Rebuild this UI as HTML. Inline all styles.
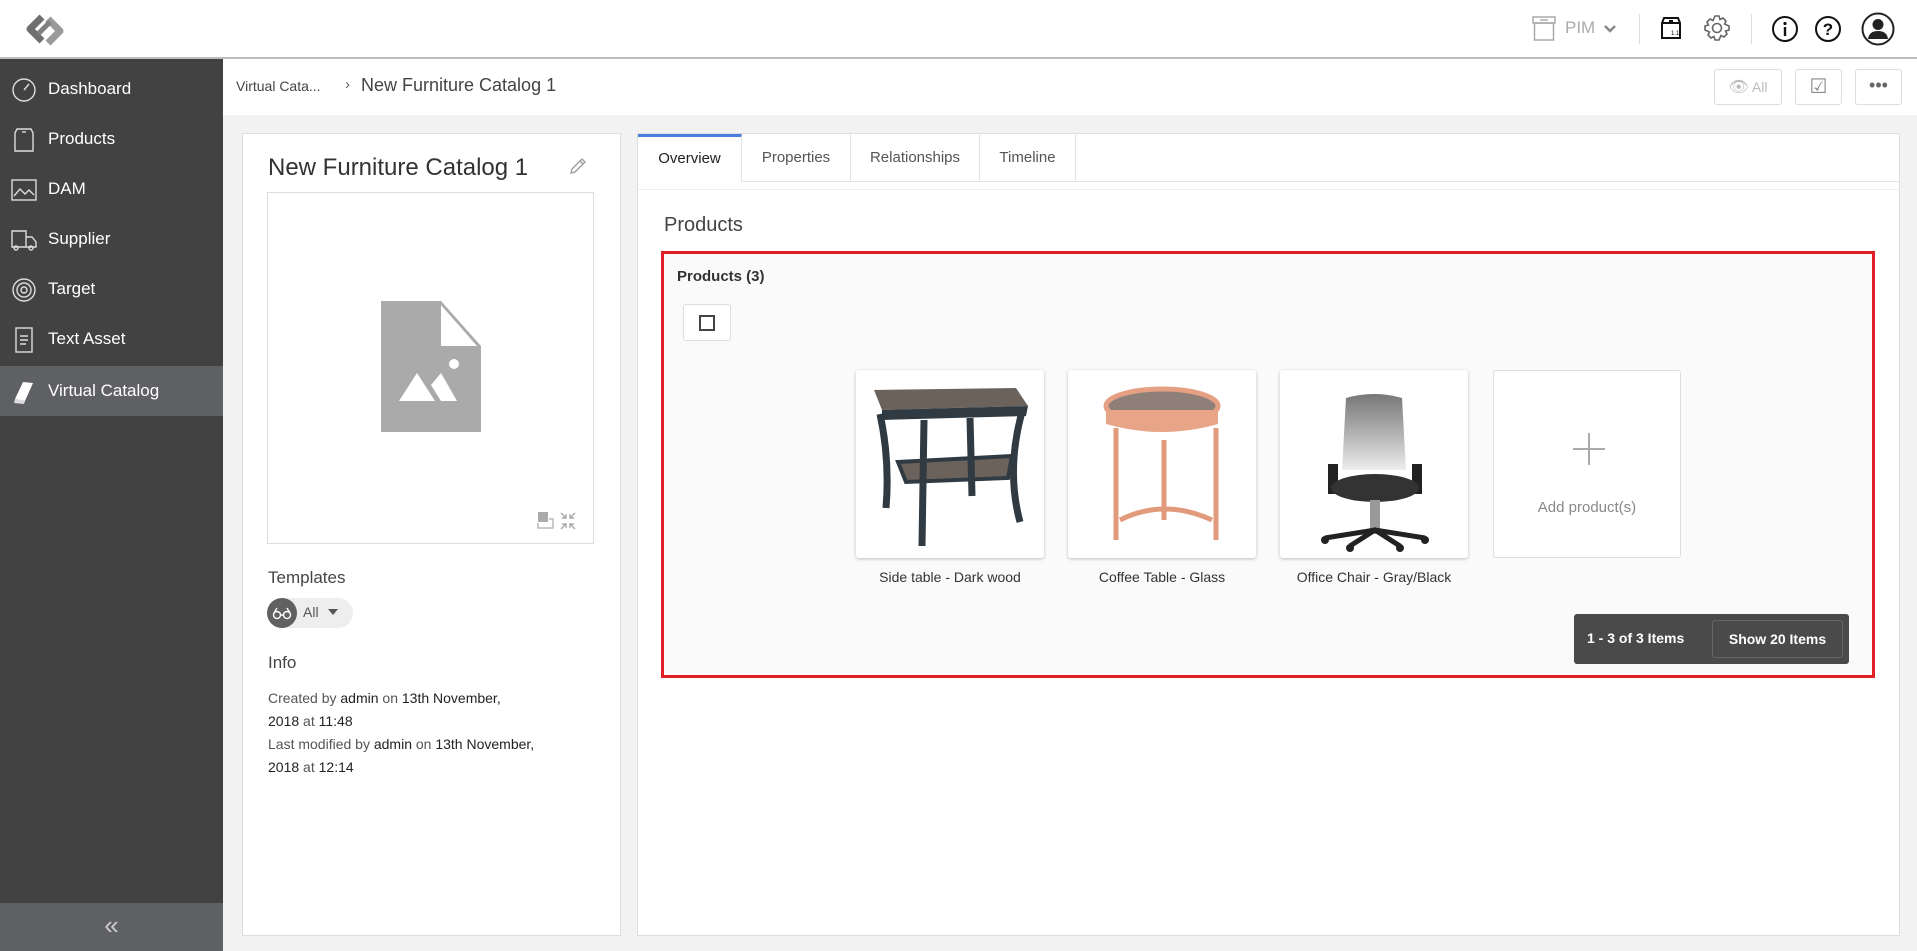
<!DOCTYPE html>
<html><head><meta charset="utf-8"><style>
*{box-sizing:border-box;margin:0;padding:0}
body{width:1917px;height:951px;overflow:hidden;font-family:"Liberation Sans",sans-serif;background:#f2f2f2;position:relative;color:#333}
.abs{position:absolute}
#top{left:0;top:0;width:1917px;height:59px;background:#fff;border-bottom:2px solid #bdbdbd}
#side{left:0;top:59px;width:223px;height:892px;background:#424242}
.nav{position:absolute;left:0;width:223px;height:50px;color:#fff;font-size:17px;line-height:50px;padding-left:48px}
.nav svg{position:absolute;left:11px;top:13px}
.nav.act{background:#5f6063}
#collapse{left:0;top:903px;width:223px;height:48px;background:#5f6063;color:#ccc;font-size:26px;text-align:center;line-height:44px}
#crumb{left:223px;top:59px;width:1694px;height:56px;background:#fff}
.btn{position:absolute;top:69px;height:36px;border:1px solid #ddd;border-radius:3px;background:#fff;color:#bbb;font-size:14px;text-align:center;line-height:34px}
#left{left:242px;top:133px;width:379px;height:803px;background:#fff;border:1px solid #ddd}
#right{left:637px;top:133px;width:1263px;height:803px;background:#fff;border:1px solid #ddd}
.tab{position:absolute;top:0;height:48px;line-height:48px;font-size:15px;color:#555;text-align:center;border-right:1px solid #e3e3e3;border-bottom:1px solid #e3e3e3;background:#fff}
#red{left:661px;top:251px;width:1214px;height:427px;border:3px solid #e41e26;background:#fafafa}
.card{position:absolute;top:370px;width:188px;height:188px;background:#fff;border-radius:3px;box-shadow:0 1px 3px rgba(0,0,0,.25)}
.lbl{position:absolute;top:569px;width:188px;text-align:center;font-size:14px;color:#333}
.info{position:absolute;left:267px;font-size:14px;color:#555}
.info b{font-weight:normal;color:#222}
</style></head><body>
<div id="top" class="abs">
 <svg class="abs" style="left:22px;top:12px" width="46" height="36" viewBox="0 0 46 36"><path d="M20 5 L8 17 L20 29" fill="none" stroke="#6f6f6f" stroke-width="7" stroke-linejoin="round"/><path d="M26 7 L38 19 L26 31" fill="none" stroke="#9a9a9a" stroke-width="7" stroke-linejoin="round"/><path d="M28 10 L17 21" stroke="#7f7f7f" stroke-width="5"/></svg>
 <svg class="abs" style="left:1532px;top:16px" width="24" height="26" viewBox="0 0 24 26" fill="none" stroke="#aaa" stroke-width="1.5"><rect x="1" y="1" width="22" height="6"/><rect x="2.5" y="7" width="19" height="17"/><line x1="8" y1="4" x2="16" y2="4"/></svg>
 <div class="abs" style="left:1565px;top:18px;font-size:17px;color:#aaa">PIM</div>
 <svg class="abs" style="left:1603px;top:24px" width="14" height="10" viewBox="0 0 14 10"><path d="M2 2 L7 7 L12 2" fill="none" stroke="#888" stroke-width="2.5"/></svg>
 <div class="abs" style="left:1639px;top:14px;width:1px;height:30px;background:#ddd"></div>
 <svg class="abs" style="left:1660px;top:16px" width="22" height="24" viewBox="0 0 22 24" fill="none" stroke="#111" stroke-width="2"><path d="M2 7 L4 2 H18 L20 7 V22 H2 Z M2 7 H20"/><line x1="9" y1="5" x2="13" y2="5"/><text x="11" y="19" font-size="6" fill="#111" stroke="none">1.1</text></svg>
 <svg class="abs" style="left:1703px;top:14px" width="28" height="28" viewBox="0 0 28 28" fill="none" stroke="#666" stroke-width="1.6"><circle cx="14" cy="14" r="4.5"/><path d="M12 2h4l1 3.5 3-1.5 3 3-1.5 3L26 12v4l-3.5 1 1.5 3-3 3-3-1.5L16 26h-4l-1-3.5-3 1.5-3-3 1.5-3L2 16v-4l3.5-1L4 8l3-3 3 1.5z"/></svg>
 <div class="abs" style="left:1751px;top:14px;width:1px;height:30px;background:#ddd"></div>
 <svg class="abs" style="left:1771px;top:15px" width="28" height="28" viewBox="0 0 28 28"><circle cx="14" cy="14" r="12" fill="none" stroke="#111" stroke-width="2"/><rect x="12.8" y="12" width="2.4" height="9" fill="#111"/><circle cx="14" cy="8.5" r="1.6" fill="#111"/></svg>
 <svg class="abs" style="left:1814px;top:15px" width="28" height="28" viewBox="0 0 28 28"><circle cx="14" cy="14" r="12" fill="none" stroke="#111" stroke-width="2"/><text x="14" y="20" font-size="17" font-weight="bold" text-anchor="middle" fill="#111" font-family="Liberation Sans">?</text></svg>
 <svg class="abs" style="left:1861px;top:12px" width="34" height="34" viewBox="0 0 34 34"><circle cx="17" cy="17" r="15.5" fill="none" stroke="#222" stroke-width="2"/><circle cx="17" cy="12.5" r="5.5" fill="#222"/><path d="M7 27 Q8 19 17 19 Q26 19 27 27 Z" fill="#222"/></svg>
</div>
<div id="side" class="abs">
 <div class="nav" style="top:5px"><svg width="26" height="26" viewBox="0 0 26 26" fill="none" stroke="#ddd" stroke-width="1.4"><circle cx="13" cy="13" r="11"/><line x1="13" y1="13" x2="18" y2="7"/></svg>Dashboard</div>
 <div class="nav" style="top:55px"><svg width="26" height="26" viewBox="0 0 26 26" fill="none" stroke="#ddd" stroke-width="1.4"><path d="M4 6 L6 2 H20 L22 6 V24 H4 Z"/><line x1="11" y1="5" x2="15" y2="5"/></svg>Products</div>
 <div class="nav" style="top:105px"><svg width="26" height="26" viewBox="0 0 26 26" fill="none" stroke="#ddd" stroke-width="1.4"><rect x="1" y="3" width="24" height="20"/><path d="M3 19 L9 12 L14 17 L18 13 L23 18"/></svg>DAM</div>
 <div class="nav" style="top:155px"><svg width="26" height="26" viewBox="0 0 26 26" fill="none" stroke="#ddd" stroke-width="1.4"><path d="M1 4 H15 V20 H1 Z M15 10 H21 L25 15 V20 H15"/><circle cx="5" cy="21" r="2"/><circle cx="20" cy="21" r="2"/></svg>Supplier</div>
 <div class="nav" style="top:205px"><svg width="26" height="26" viewBox="0 0 26 26" fill="none" stroke="#ddd" stroke-width="1.4"><circle cx="13" cy="13" r="11"/><circle cx="13" cy="13" r="7"/><circle cx="13" cy="13" r="3"/></svg>Target</div>
 <div class="nav" style="top:255px"><svg width="26" height="26" viewBox="0 0 26 26" fill="none" stroke="#ddd" stroke-width="1.4"><rect x="5" y="1" width="16" height="24"/><path d="M9 9h8M9 13h8M9 17h6"/></svg>Text Asset</div>
 <div class="nav act" style="top:307px"><svg width="26" height="26" viewBox="0 0 26 26"><path d="M4 20 L12 3 L22 4 L14 22 Z" fill="#fff"/><path d="M4 20 L3 24 L13 25 L14 22" fill="#ddd"/></svg>Virtual Catalog</div>
</div>
<div id="collapse" class="abs">«</div>
<div id="crumb" class="abs">
 <div class="abs" style="left:13px;top:19px;font-size:14px;color:#444">Virtual Cata...</div>
 <div class="abs" style="left:122px;top:17px;font-size:15px;color:#666">›</div>
 <div class="abs" style="left:138px;top:16px;font-size:18px;color:#444">New Furniture Catalog 1</div>
</div>
<div class="btn" style="left:1714px;width:68px"><span style="font-size:16px">👁</span> All</div>
<div class="btn" style="left:1795px;width:47px;color:#888;font-size:20px">☑</div>
<div class="btn" style="left:1855px;width:47px;color:#666;font-size:18px;line-height:30px">•••</div>

<div id="left" class="abs">
 <div class="abs" style="left:25px;top:20px;font-size:24px;color:#333">New Furniture Catalog 1</div>
 <svg class="abs" style="left:325px;top:22px" width="20" height="20" viewBox="0 0 20 20" fill="none" stroke="#999" stroke-width="1.3"><path d="M3 17 L4 13 L14 3 L17 6 L7 16 Z M12 5 L15 8"/></svg>
 <div class="abs" style="left:24px;top:58px;width:327px;height:352px;border:1px solid #ddd"></div>
 <svg class="abs" style="left:138px;top:167px" width="100" height="131" viewBox="0 0 100 131"><path d="M0 0 H60 L100 45 V131 H0 Z" fill="#aaa"/><path d="M60 4 L60 45 L96 45 Z" fill="#fff"/><circle cx="73" cy="63" r="5" fill="#fff"/><path d="M18 100 L36 72 L54 100 Z M50 84 L60 72 L76 100 L60 100 Z" fill="#fff"/></svg>
 <svg class="abs" style="left:294px;top:377px" width="42" height="20" viewBox="0 0 42 20"><rect x="1" y="1" width="10" height="10" fill="#aaa"/><path d="M1 12 V17 H16 V8 H12" fill="none" stroke="#aaa" stroke-width="1.2"/><path d="M24 2 L29 7 M29 3 V7 H25 M38 2 L33 7 M33 3 V7 H37 M24 18 L29 13 M29 17 V13 H25 M38 18 L33 13 M33 17 V13 H37" stroke="#aaa" stroke-width="1.4" fill="none"/></svg>
 <div class="abs" style="left:25px;top:434px;font-size:17px;color:#444">Templates</div>
 <div class="abs" style="left:24px;top:464px;width:86px;height:30px;border-radius:15px;background:#eee"></div>
 <div class="abs" style="left:24px;top:464px;width:30px;height:30px;border-radius:15px;background:#616161"></div>
 <svg class="abs" style="left:29px;top:472px" width="20" height="14" viewBox="0 0 20 14" fill="none" stroke="#fff" stroke-width="1.4"><circle cx="5" cy="9" r="3.5"/><circle cx="15" cy="9" r="3.5"/><path d="M8.5 9h3M2 7 L5 2 M18 7 L15 2"/></svg>
 <div class="abs" style="left:60px;top:470px;font-size:14px;color:#555">All</div>
 <div class="abs" style="left:85px;top:475px;width:0;height:0;border-left:5px solid transparent;border-right:5px solid transparent;border-top:6px solid #555"></div>
 <div class="abs" style="left:25px;top:519px;font-size:17px;color:#444">Info</div>
 <div class="info" style="left:25px;top:553px;line-height:23px;width:330px">Created by <b>admin</b> on <b>13th November,<br>2018</b> at <b>11:48</b><br>Last modified by <b>admin</b> on <b>13th November,<br>2018</b> at <b>12:14</b></div>
</div>

<div id="right" class="abs">
 <div class="tab" style="left:0;width:104px;color:#222;border-bottom:1px solid #fff;border-top:3px solid #4a7fe0;line-height:44px">Overview</div>
 <div class="tab" style="left:104px;width:109px">Properties</div>
 <div class="tab" style="left:213px;width:129px">Relationships</div>
 <div class="tab" style="left:342px;width:96px">Timeline</div>
 <div class="abs" style="left:438px;top:47px;width:824px;height:1px;background:#e3e3e3"></div>
 <div class="abs" style="left:0;top:55px;width:1262px;height:1px;background:#eee"></div>
 <div class="abs" style="left:26px;top:80px;font-size:20px;color:#444">Products</div>
</div>
<div id="red" class="abs">
 <div class="abs" style="left:13px;top:14px;font-size:15px;font-weight:bold;color:#333">Products (3)</div>
 <div class="abs" style="left:19px;top:50px;width:48px;height:37px;border:1px solid #ddd;border-radius:3px;background:#fff"></div>
 <div class="abs" style="left:35px;top:61px;width:16px;height:16px;border:2px solid #444"></div>
</div>
<div class="card" style="left:856px"><svg width="188" height="188" viewBox="0 0 188 188"><path d="M18 20 L160 18 L172 36 L26 40 Z" fill="#6b625c"/><path d="M26 40 L172 36 L170 46 L26 50 Z" fill="#2f3a42"/><path d="M42 92 L156 86 L152 108 L50 112 Z" fill="#6b625c" stroke="#2f3a42" stroke-width="4"/><path d="M24 44 Q34 90 30 138 M68 50 L66 176 M166 42 Q150 100 164 152 M114 48 L116 126" stroke="#2f3a42" stroke-width="7" fill="none"/></svg></div>
<div class="card" style="left:1068px"><svg width="188" height="188" viewBox="0 0 188 188"><ellipse cx="94" cy="36" rx="56" ry="17" fill="#8e8078" stroke="#e5a083" stroke-width="5"/><path d="M38 40 V54 Q94 70 150 54 V40" fill="#e8a486"/><path d="M48 58 V170 M148 58 V170 M96 70 V150 M52 150 Q96 128 144 150 M96 120 L96 140" stroke="#e29a7c" stroke-width="5" fill="none"/></svg></div>
<div class="card" style="left:1280px"><svg width="188" height="188" viewBox="0 0 188 188"><defs><linearGradient id="g" x1="0" y1="0" x2="0" y2="1"><stop offset="0" stop-color="#777"/><stop offset=".6" stop-color="#bbb"/><stop offset="1" stop-color="#eee"/></linearGradient></defs><path d="M66 28 Q94 20 122 28 L126 100 L62 100 Z" fill="url(#g)"/><rect x="48" y="94" width="10" height="30" fill="#222"/><rect x="132" y="94" width="10" height="30" fill="#222"/><ellipse cx="95" cy="118" rx="44" ry="14" fill="#333"/><rect x="90" y="130" width="10" height="34" fill="#999"/><path d="M45 168 L95 160 L145 168 M70 176 L95 160 L120 176" stroke="#222" stroke-width="5" fill="none"/><circle cx="45" cy="170" r="4" fill="#222"/><circle cx="145" cy="170" r="4" fill="#222"/><circle cx="70" cy="178" r="4" fill="#222"/><circle cx="120" cy="178" r="4" fill="#222"/></svg></div>
<div class="card" style="left:1493px;box-shadow:none;border:1px solid #ddd"><div class="abs" style="left:79px;top:77px;width:32px;height:2px;background:#aaa"></div><div class="abs" style="left:94px;top:62px;width:2px;height:32px;background:#aaa"></div><div class="abs" style="left:0;top:128px;width:186px;text-align:center;font-size:15px;color:#888">Add product(s)</div></div>
<div class="lbl" style="left:856px">Side table - Dark wood</div>
<div class="lbl" style="left:1068px">Coffee Table - Glass</div>
<div class="lbl" style="left:1280px">Office Chair - Gray/Black</div>
<div class="abs" style="left:1574px;top:614px;width:275px;height:50px;background:#4a4a4a;border-radius:3px"></div>
<div class="abs" style="left:1587px;top:630px;font-size:14px;font-weight:bold;color:#fff">1 - 3 of 3 Items</div>
<div class="abs" style="left:1712px;top:620px;width:131px;height:38px;border:1px solid #666;border-radius:3px;color:#fff;font-size:14px;font-weight:bold;text-align:center;line-height:36px">Show 20 Items</div>
</body></html>
